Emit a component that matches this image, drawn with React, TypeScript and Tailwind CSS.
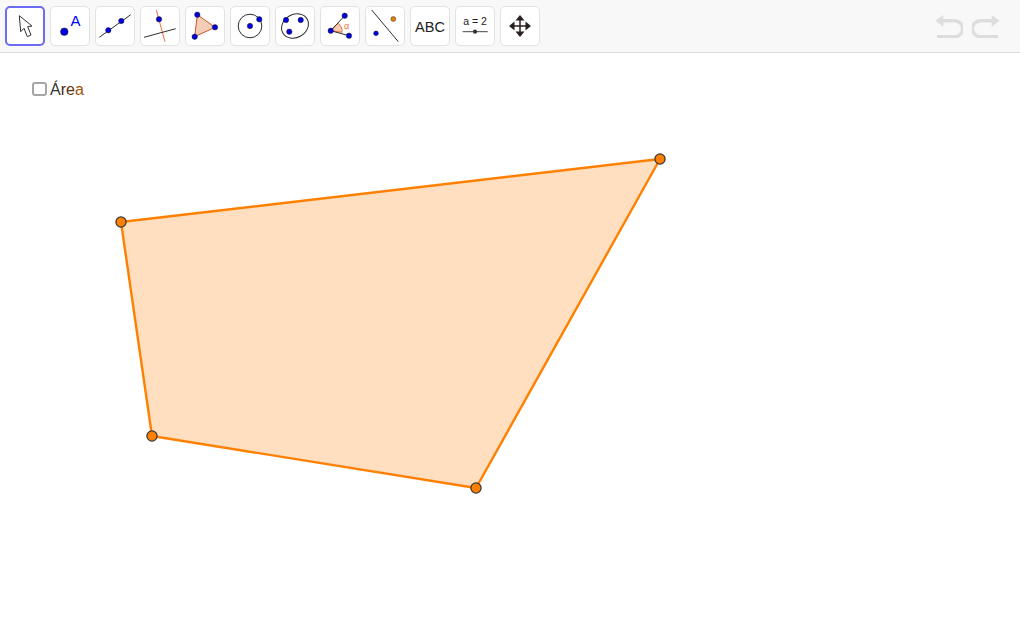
import type { ReactNode } from "react"

const BLUE = "#0000e0"
const DARK = "#2e2e2e"

function Dot({ x, y, r = 2.7, fill = BLUE }: { x: number; y: number; r?: number; fill?: string }) {
  return <circle cx={x} cy={y} r={r} fill={fill} stroke="#222" strokeWidth={0.5} />
}

// icon coordinates are in button space (0-40), whatever the border width
function ToolButton({ active, children }: { active?: boolean; children: ReactNode }) {
  return (
    <div
      className={
        active
          ? "w-10 h-10 rounded-[5px] bg-white border-2 border-[#6b6bf5]"
          : "w-10 h-10 rounded-[5px] bg-white border border-[#e2e2e2]"
      }
    >
      <svg viewBox={active ? "2 2 36 36" : "1 1 38 38"} className={active ? "w-9 h-9" : "w-[38px] h-[38px]"}>
        {children}
      </svg>
    </div>
  )
}

const points = "121,222 660,159 476,488 152,436"
const vertices = [
  [121, 222],
  [660, 159],
  [476, 488],
  [152, 436],
]

export default function App() {
  return (
    <div className="w-[1020px] h-[620px] bg-white flex flex-col overflow-hidden font-['Liberation_Sans',sans-serif]">
      <div className="h-[53px] shrink-0 bg-[#f8f8f8] border-b border-[#dcdcdc] flex items-start pt-1.5 pl-[5px] pr-[20px] gap-[5px]">
        <ToolButton active>
          <path d="M14.3 9.7 L15.7 25.7 L19 22.3 L22.3 30.7 L26 29 L22.7 20.7 L27 20 Z" fill="#fff" stroke="#333" strokeWidth={1} strokeLinejoin="round" />
        </ToolButton>
        <ToolButton>
          <Dot x={14.3} y={25.7} r={3.8} />
          <text x={20.5} y={19.5} fontSize={15} fill="#0000ff" fontFamily="Liberation Sans, sans-serif">A</text>
        </ToolButton>
        <ToolButton>
          <line x1={4.3} y1={31.3} x2={35.7} y2={8.7} stroke={DARK} strokeWidth={1} />
          <Dot x={13.3} y={24.3} />
          <Dot x={26.3} y={15} />
        </ToolButton>
        <ToolButton>
          <line x1={16.3} y1={4} x2={25} y2={35.7} stroke="#f0703a" strokeWidth={1} />
          <line x1={4} y1={31.3} x2={35.7} y2={22.7} stroke={DARK} strokeWidth={1} />
          <Dot x={19} y={13.3} />
        </ToolButton>
        <ToolButton>
          <polygon points="12.3,8.7 30,21.3 9.7,30.7" fill="#f3cdb5" stroke="#c8552c" strokeWidth={1} />
          <Dot x={12.3} y={8.7} />
          <Dot x={30} y={21.3} />
          <Dot x={9.7} y={30.7} />
        </ToolButton>
        <ToolButton>
          <circle cx={20} cy={20} r={11.8} fill="none" stroke={DARK} strokeWidth={1} />
          <Dot x={20} y={20} />
          <Dot x={29.3} y={13.3} />
        </ToolButton>
        <ToolButton>
          <ellipse cx={20} cy={20} rx={14} ry={11.5} transform="rotate(-30 20 20)" fill="none" stroke={DARK} strokeWidth={1} />
          <Dot x={11} y={14} />
          <Dot x={25.7} y={14} />
          <Dot x={14.3} y={25.7} />
        </ToolButton>
        <ToolButton>
          <path d="M10.7 24.7 L18 17.3 A 10 10 0 0 1 22 26.3 Z" fill="#f6cdb0" stroke="#f0703a" strokeWidth={1} />
          <line x1={10.7} y1={24.7} x2={24.7} y2={9.7} stroke={DARK} strokeWidth={1} />
          <line x1={10.7} y1={24.7} x2={29} y2={29.7} stroke={DARK} strokeWidth={1} />
          <Dot x={10.7} y={24.7} />
          <Dot x={24.7} y={9.7} />
          <Dot x={29} y={29.7} />
          <text x={24} y={23} fontSize={9} fill="#f0703a" fontFamily="Liberation Sans, sans-serif">α</text>
        </ToolButton>
        <ToolButton>
          <line x1={6.7} y1={4} x2={33.3} y2={35.7} stroke={DARK} strokeWidth={1} />
          <Dot x={28.3} y={13} r={2.4} fill="#f08000" />
          <Dot x={11} y={27.3} r={2.4} />
        </ToolButton>
        <ToolButton>
          <text x={20} y={25.5} textAnchor="middle" fontSize={14.5} fill="#222" fontFamily="Liberation Sans, sans-serif">ABC</text>
        </ToolButton>
        <ToolButton>
          <text x={20} y={19} textAnchor="middle" fontSize={10.5} fill="#222" fontFamily="Liberation Sans, sans-serif">a = 2</text>
          <line x1={7.7} y1={25.7} x2={32.7} y2={25.7} stroke="#444" strokeWidth={1} />
          <circle cx={20} cy={25.7} r={2.1} fill="#333" />
        </ToolButton>
        <ToolButton>
          <path d="M20 11 V29 M11 20 H29" stroke="#2b2020" strokeWidth={1.5} />
          <path d="M20 9 L15.5 14.5 H24.5 Z M20 31 L15.5 25.5 H24.5 Z M9 20 L14.5 15.5 V24.5 Z M31 20 L25.5 15.5 V24.5 Z" fill="#2b2020" />
        </ToolButton>
        <div className="ml-auto flex items-center gap-[9px] h-10">
          <svg viewBox="0 0 28 24" className="w-7 h-6">
            <path d="M8 6.7 H19.7 A 8 8 0 0 1 19.7 22.7 H2" fill="none" stroke="#dddddd" strokeWidth={3.4} />
            <path d="M0.3 6.7 L8.3 1 V12.4 Z" fill="#dddddd" />
          </svg>
          <svg viewBox="0 0 28 24" className="w-7 h-6">
            <path d="M20 6.7 H8.3 A 8 8 0 0 0 8.3 22.7 H26" fill="none" stroke="#dddddd" strokeWidth={3.4} />
            <path d="M27.7 6.7 L19.7 1 V12.4 Z" fill="#dddddd" />
          </svg>
        </div>
      </div>

      <div className="relative flex-1">
        <svg viewBox="0 53 1020 567" className="absolute inset-0 w-full h-full">
          <polygon points={points} fill="#ffdfc0" stroke="#ff8000" strokeWidth={2.4} strokeLinejoin="round" />
          {vertices.map(([x, y]) => (
            <circle key={x} cx={x} cy={y} r={5.1} fill="#ff8000" stroke="#333" strokeWidth={1.2} />
          ))}
        </svg>
        <label className="absolute left-[32px] top-[27px] flex items-center gap-[3px] text-[16px] leading-5 text-[#333333]">
          <span className="w-[15px] h-[14px] mb-[2px] rounded-[3px] border-2 border-[#a6a6a6] bg-white" />
          <span>
            Á<span className="text-[#4a2a10]">r</span>
            <span className="text-[#5e3410]">e</span>
            <span className="text-[#a05510]">a</span>
          </span>
        </label>
      </div>
    </div>
  )
}
